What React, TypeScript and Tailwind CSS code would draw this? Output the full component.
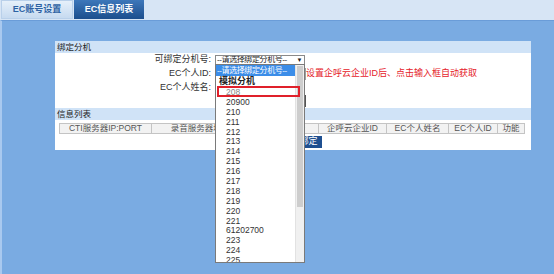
import React from "react";

const FONT = { fontFamily: '"Liberation Sans", "Noto Sans CJK SC", sans-serif' };

const options = [
  "20900", "210", "211", "212", "213", "214", "215", "216", "217", "218", "219", "220", "221", "61202700", "223", "224", "225",
];

const cols: [string, number][] = [
  ["CTI服务器IP:PORT", 93],
  ["录音服务器地址", 98],
  ["绑定分机号", 69],
  ["企呼云企业ID", 68],
  ["EC个人姓名", 62],
  ["EC个人ID", 49],
  ["功能", 27],
];

export default function App() {
  return (
    <div className="relative w-[554px] h-[274px] overflow-hidden flex flex-col bg-[#7aabe2]" style={FONT}>
      {/* top tab bar */}
      <div className="h-[20px] bg-[#d7e5f5] flex items-start pl-[1px] gap-[1px] shrink-0">
        <div className="h-[19px] w-[72px] flex items-center justify-center text-[9px] font-bold text-[#2d62a3] bg-gradient-to-b from-[#e6f0fa] to-[#c6daf0] border border-[#b9d0ea]">
          EC账号设置
        </div>
        <div className="h-[19px] w-[70px] flex items-center justify-center text-[9px] font-bold text-white bg-gradient-to-b from-[#3d77ba] to-[#1b4e8d]">
          EC信息列表
        </div>
      </div>

      {/* main area */}
      <div className="flex-1 border-l-2 border-l-[#a9c9ef] border-t border-t-[#6a9cd8] pt-[20px] pl-[53px]">
        <div className="w-[476px] bg-white flex flex-col pb-[2px]">
          <div className="h-[12px] bg-[#d0e3f7] text-[8.5px] leading-[12px] pl-[2px] text-[#222]">绑定分机</div>

          {/* form */}
          <div className="h-[55px] pt-[1px] flex flex-col text-[9px] text-[#333]">
            <div className="h-[12px] flex items-center">
              <div className="w-[156px] text-right">可绑定分机号:</div>
              <div className="ml-[4px] w-[90px] h-[11px] border border-[#8a8a8a] flex items-center justify-between pl-[1px] pr-[2px] text-[8px] tracking-[-0.4px] text-[#222] whitespace-nowrap overflow-hidden">
                <span>--请选择绑定分机号--</span>
                <span className="text-[6px]">▼</span>
              </div>
            </div>
            <div className="mt-[2px] h-[12px] flex items-center">
              <div className="w-[156px] text-right">EC个人ID:</div>
              <div className="ml-[5px] w-[90px] h-[12px] border border-[#a0a0a0]" />
              <div className="text-[#e5222a] text-[9px]">设置企呼云企业ID后、点击输入框自动获取</div>
            </div>
            <div className="mt-[1px] h-[12px] flex items-start">
              <div className="w-[156px] text-right leading-[12px]">EC个人姓名:</div>
              <div className="ml-[5px] mt-[14px] w-[90px] h-[12px] border-r border-r-[#555]" />
            </div>
          </div>

          <div className="h-[12px] bg-[#d0e3f7] text-[8.5px] leading-[12px] pl-[2px] text-[#222]">信息列表</div>

          {/* table */}
          <div className="mt-[3px] ml-[4px] flex w-[466px] h-[11px]">
            {cols.map(([t, w], i) => (
              <div
                key={i}
                className="h-[11px] flex items-center justify-center bg-[#f2f2f2] border border-[#c4c4c4] border-l-0 first:border-l text-[8.5px] text-[#555] whitespace-nowrap overflow-hidden"
                style={{ width: w }}
              >
                {t}
              </div>
            ))}
          </div>

          <div className="mt-[2px] h-[12px] flex">
            <div className="ml-[240px] w-[27px] h-[12px] bg-[#1e4f90] text-white text-[9px] flex items-center justify-center">绑定</div>
          </div>
        </div>
      </div>

      {/* dropdown list overlay */}
      <div className="absolute left-[215px] top-[64px] w-[90px] h-[199px] bg-white border border-[#7a7a7a] flex overflow-hidden">
        <div className="w-[80px] flex flex-col text-[8.5px] text-[#333]">
          <div className="h-[11px] bg-[#3b8de8] text-white text-[8px] tracking-[-0.4px] leading-[11px] pl-[1px] whitespace-nowrap overflow-hidden shrink-0">--请选择绑定分机号--</div>
          <div className="h-[11px] leading-[11px] font-bold text-[9px] text-[#222] pl-[3px] shrink-0">模拟分机</div>
          <div className="h-[9.9px] leading-[10px] pl-[10px] text-[#888] shrink-0">208</div>
          {options.map((o) => (
            <div key={o} className="h-[9.9px] leading-[10px] pl-[10px] shrink-0">{o}</div>
          ))}
        </div>
        <div className="w-[9px] bg-[#f0f0f0] border-l border-[#e2e2e2] pt-[1px]">
          <div className="h-[141px] bg-[#cdcdcd] mx-[1px]" />
        </div>
      </div>

      {/* red annotation box */}
      <div className="absolute left-[217px] top-[86px] w-[83px] h-[11px] border-2 border-[#e0202a]" />
    </div>
  );
}
